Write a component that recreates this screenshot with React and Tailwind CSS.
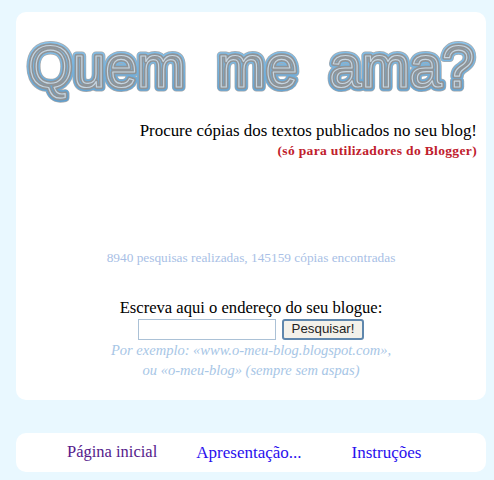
const serif = "font-['Liberation_Serif',serif]";

function Logo() {
  const text = {
    x: 12,
    y: 57,
    fontFamily: "'Liberation Sans', sans-serif",
    fontSize: 60,
    textLength: 446,
    lengthAdjust: "spacingAndGlyphs",
    strokeLinejoin: "round",
    strokeLinecap: "round",
    fill: "none",
    xmlSpace: "preserve",
  };
  const label = "Quem  me  ama?";

  return (
    <svg width="470" height="70" viewBox="0 0 470 70" className="block overflow-visible">
      <defs>
        <linearGradient id="rim" x1="0" y1="0" x2="0" y2="1">
          <stop offset="0" stopColor="#8fc9f0" />
          <stop offset="1" stopColor="#5f9fcf" />
        </linearGradient>
      </defs>
      <text {...text} stroke="#8a8e92" strokeWidth="9" opacity="0.75">{label}</text>
      <text {...text} stroke="url(#rim)" strokeWidth="7.6">{label}</text>
      <text {...text} stroke="#8f9498" strokeWidth="4.6">{label}</text>
      <text {...text} stroke="#c6d6e2" strokeWidth="1.2">{label}</text>
    </svg>
  );
}

export default function App() {
  return (
    <div className={`${serif} w-[494px] h-[480px] overflow-hidden bg-[#e9f8ff] pt-3 pl-4 pr-2`}>
      <div className="h-[388px] rounded-[10px] bg-white pt-[18px]">
        <Logo />
        <div className="mt-[20px] pr-[9px] text-right">
          <p className="text-[16.9px] leading-[22px] text-black">Procure cópias dos textos publicados no seu blog!</p>
          <p className="text-[13.5px] leading-[18px] font-bold tracking-[0.35px] text-[#c0202c]">(só para utilizadores do Blogger)</p>
        </div>
        <p className="mt-[90px] text-center text-[13.33px] leading-[16px] text-[#a9bfe6]">
          8940 pesquisas realizadas, 145159 cópias encontradas
        </p>
        <div className="mt-[33px] flex flex-col items-center">
          <label className="text-[16.6px] leading-[18px] text-black">Escreva aqui o endereço do seu blogue:</label>
          <div className="flex items-center gap-[6px] h-[24px]">
            <input className="w-[138px] h-[21px] border border-[#abc1d6] bg-white" />
            <button className="w-[82px] h-[21px] rounded-[3px] border-2 border-[#5f87ad] bg-[#f3f1ea] font-['Liberation_Sans',sans-serif] text-[13.3px] leading-none text-[#222]">
              Pesquisar!
            </button>
          </div>
          <p className="text-[14.5px] leading-[19px] italic text-[#a7c6e6]">Por exemplo: «www.o-meu-blog.blogspot.com»,</p>
          <p className="text-[14.5px] leading-[20px] italic text-[#a7c6e6]">ou «o-meu-blog» (sempre sem aspas)</p>
        </div>
      </div>
      <nav className="mt-[33px] h-[39px] rounded-[10px] bg-white flex items-center">
        <a href="#" className="ml-[51px] text-[16.5px] text-[#551a8b]">Página inicial</a>
        <a href="#" className="ml-[39px] text-[17px] text-[#2a10ee]">Apresentação...</a>
        <a href="#" className="ml-[50px] text-[17px] text-[#2a10ee]">Instruções</a>
      </nav>
    </div>
  );
}
